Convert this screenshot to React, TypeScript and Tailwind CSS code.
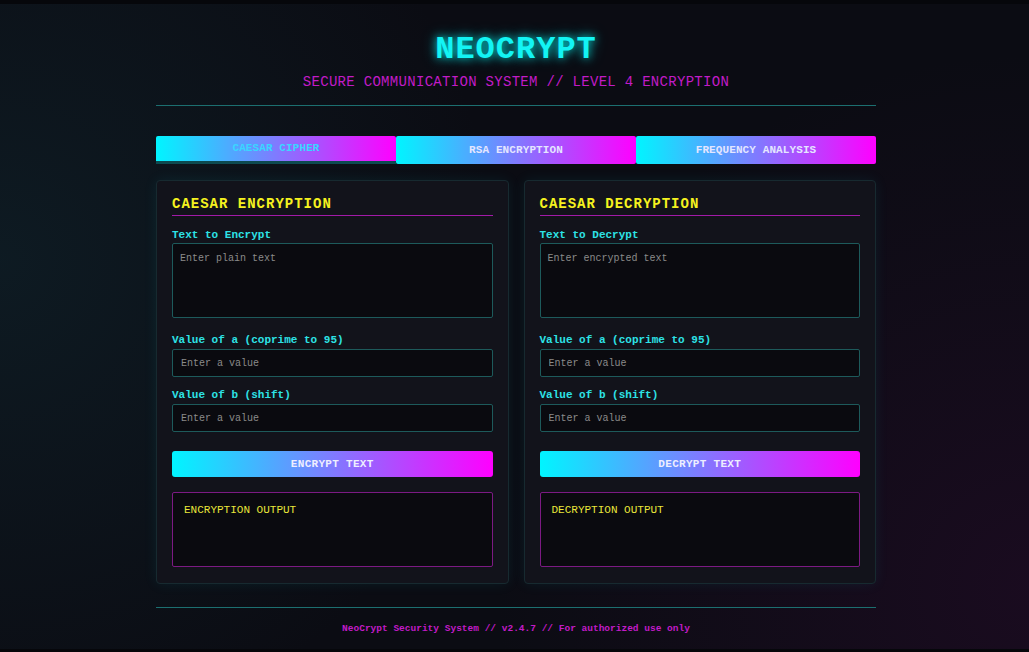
import { useState } from 'react'

const mono = { fontFamily: '"Liberation Mono", "Courier New", monospace' }

type Tab = 'caesar' | 'rsa' | 'freq'

const TABS: { id: Tab; label: string }[] = [
  { id: 'caesar', label: 'CAESAR CIPHER' },
  { id: 'rsa', label: 'RSA ENCRYPTION' },
  { id: 'freq', label: 'FREQUENCY ANALYSIS' },
]

const grad = 'bg-[linear-gradient(90deg,#00f5ff,#ff00ff)]'

function Field({ label, placeholder }: { label: string; placeholder: string }) {
  return (
    <div className="mb-[11px]">
      <label className="block text-[11px] leading-[14px] font-bold text-[#2de2e6] mb-[2px]">{label}</label>
      <input
        placeholder={placeholder}
        className="block w-full h-[28px] bg-[#0a0a0f] border border-[#1d5a5b] rounded-[2px] px-[8px] text-[10px] text-[#ccc] placeholder:text-[#8a8a8a] outline-none"
        style={mono}
      />
    </div>
  )
}

function Panel({ mode }: { mode: 'enc' | 'dec' }) {
  const enc = mode === 'enc'
  return (
    <div className="flex-1 bg-[#12131b] border border-[#172a30] rounded-[4px] px-[15px] pt-[15px] pb-[16px] shadow-[0_0_14px_rgba(0,220,230,0.08)]">
      <h2 className="text-[14px] leading-[17px] font-bold tracking-[1px] text-[#f5f21f] pb-[2px]">
        {enc ? 'CAESAR ENCRYPTION' : 'CAESAR DECRYPTION'}
      </h2>
      <div className="h-px bg-[#a21aa8]" />
      <div className="mt-[12px] mb-[15px]">
        <label className="block text-[11px] leading-[14px] font-bold text-[#2de2e6] mb-[1px]">
          {enc ? 'Text to Encrypt' : 'Text to Decrypt'}
        </label>
        <textarea
          placeholder={enc ? 'Enter plain text' : 'Enter encrypted text'}
          className="block w-full h-[75px] bg-[#0a0a0f] border border-[#1d5a5b] rounded-[2px] px-[7px] py-[7px] text-[10px] text-[#ccc] placeholder:text-[#8a8a8a] outline-none resize-none"
          style={mono}
        />
      </div>
      <Field label="Value of a (coprime to 95)" placeholder="Enter a value" />
      <Field label="Value of b (shift)" placeholder="Enter a value" />
      <button
        className={`block w-full h-[26px] mt-[19px] rounded-[3px] ${grad} text-[11px] font-bold text-[#eef] tracking-[0.3px]`}
        style={mono}
      >
        {enc ? 'ENCRYPT TEXT' : 'DECRYPT TEXT'}
      </button>
      <div className="mt-[15px] h-[75px] bg-[#0a0a0f] border border-[#7c1a83] rounded-[2px] px-[11px] py-[10px] text-[11px] leading-[15px] text-[#e9e63a]">
        {enc ? 'ENCRYPTION OUTPUT' : 'DECRYPTION OUTPUT'}
      </div>
    </div>
  )
}

export default function App() {
  const [tab, setTab] = useState<Tab>('caesar')

  return (
    <div
      className="relative min-h-screen overflow-hidden pl-[3px] bg-[#0b0c13] bg-[radial-gradient(circle_at_0%_40%,rgba(20,60,70,0.3),transparent_45%),radial-gradient(circle_at_100%_90%,rgba(60,10,60,0.3),transparent_45%)]"
      style={mono}
    >
      {/* scan edges */}
      <div className="absolute top-0 left-0 right-0 h-[4px] bg-[#06070b]" />
      <div className="absolute bottom-0 left-0 right-0 h-[3px] bg-[#06070b]" />

      <div className="w-[720px] mx-auto pt-[30px]">
        {/* Header */}
        <header className="text-center pb-[14px]">
          <h1 className="text-[32px] leading-[40px] font-bold tracking-[1px] text-[#13f4f4] [text-shadow:0_0_8px_rgba(0,255,255,0.8),0_0_16px_rgba(0,255,255,0.4)]">
            NEOCRYPT
          </h1>
          <p className="mt-[3px] text-[14px] leading-[18px] text-[#c21bc7] tracking-[0.3px]">
            SECURE COMMUNICATION SYSTEM // LEVEL 4 ENCRYPTION
          </p>
        </header>
        <div className="h-px bg-[#1c6f70]" />

        {/* Tabs */}
        <div className="flex mt-[30px]">
          {TABS.map(t => (
            <button
              key={t.id}
              onClick={() => setTab(t.id)}
              className={`flex-1 h-[28px] rounded-[2px] ${grad} text-[11px] font-bold tracking-[0.1px] ${tab === t.id ? 'text-[#3ad6ff] border-b-[3px] border-[#0d4a50] rounded-b-none' : 'text-[#e4e6ff]'}`}
              style={mono}
            >
              {t.label}
            </button>
          ))}
        </div>

        {/* Panels */}
        <div className="flex gap-[15px] mt-[16px]">
          <Panel mode="enc" />
          <Panel mode="dec" />
        </div>

        {/* Footer */}
        <div className="h-px bg-[#1c6f70] mt-[23px]" />
        <footer className="pt-[15px] text-center text-[9.5px] leading-[12px] font-bold text-[#c21bc7]">
          NeoCrypt Security System // v2.4.7 // For authorized use only
        </footer>
      </div>
    </div>
  )
}
